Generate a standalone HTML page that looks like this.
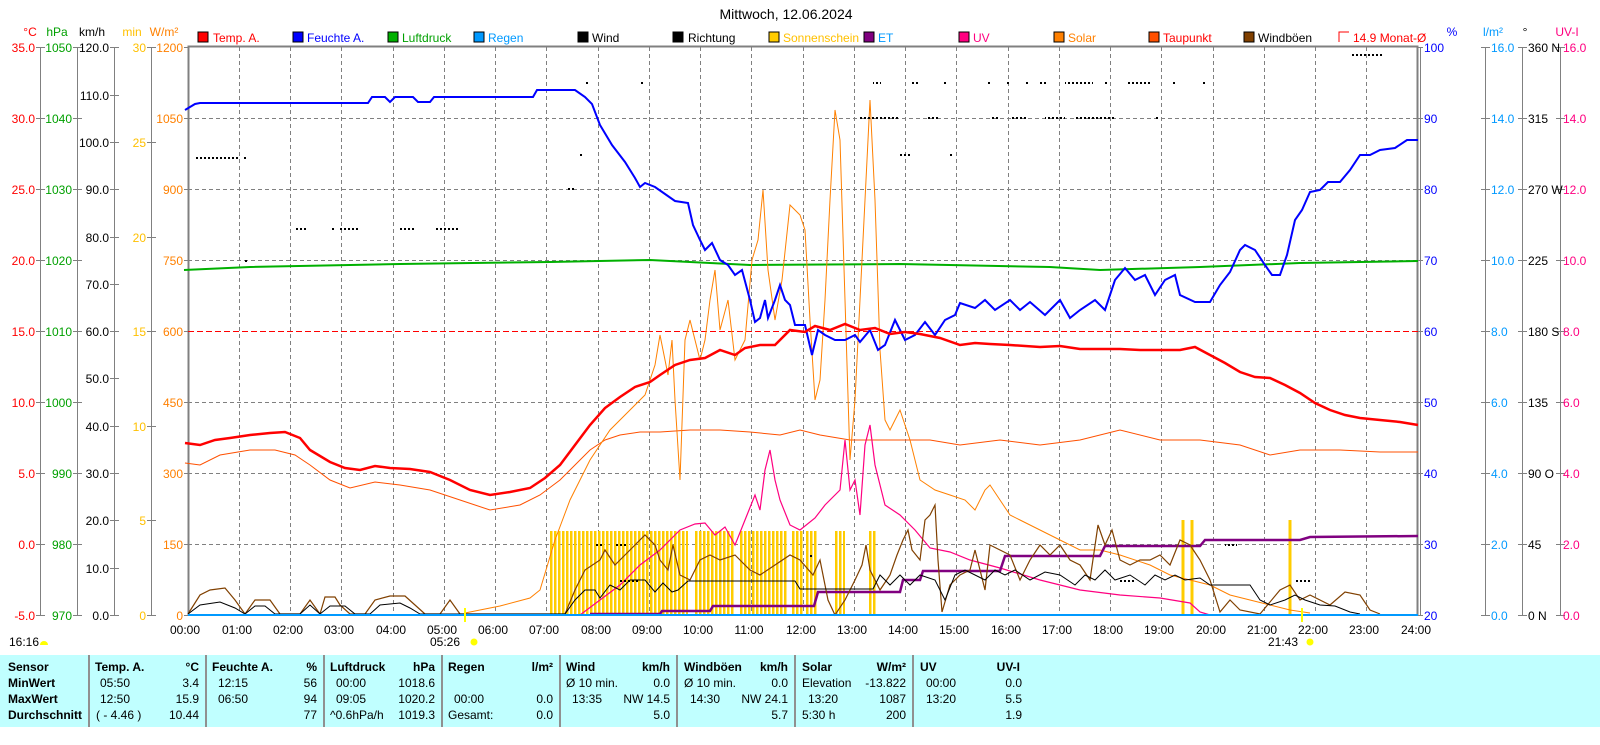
<!DOCTYPE html>
<html><head><meta charset="utf-8"><style>
html,body{margin:0;padding:0;background:#fff;}
body{width:1600px;height:740px;overflow:hidden;font-family:"Liberation Sans",Arial,sans-serif;}
svg text{font-family:"Liberation Sans",Arial,sans-serif;font-size:12px;}
</style></head><body>
<svg width="1600" height="740" xmlns="http://www.w3.org/2000/svg">
<defs><pattern id="dots" x="0" y="0" width="4" height="2" patternUnits="userSpaceOnUse"><rect x="0" y="0" width="2" height="2" fill="#000"/></pattern></defs>
<text x="786" y="19" text-anchor="middle" font-size="14" style="font-size:14px">Mittwoch, 12.06.2024</text>
<g>
<text x="30" y="36" fill="#f00" text-anchor="middle">°C</text>
<text x="57" y="36" fill="#00a000" text-anchor="middle">hPa</text>
<text x="92" y="36" text-anchor="middle">km/h</text>
<text x="132" y="36" fill="#ffc000" text-anchor="middle">min</text>
<text x="164" y="36" fill="#ff8000" text-anchor="middle">W/m²</text>
<text x="1452" y="36" fill="#00f" text-anchor="middle">%</text>
<text x="1493" y="36" fill="#0099ff" text-anchor="middle">l/m²</text>
<text x="1525" y="36" text-anchor="middle">°</text>
<text x="1567" y="36" fill="#ff0080" text-anchor="middle">UV-I</text>
</g>
<g font-size="12">
<rect x="198" y="32" width="10" height="10" fill="#f00" stroke="#000"/><text x="213" y="42" fill="#f00">Temp. A.</text>
<rect x="293" y="32" width="10" height="10" fill="#00f" stroke="#000"/><text x="307" y="42" fill="#00f">Feuchte A.</text>
<rect x="388" y="32" width="10" height="10" fill="#00b000" stroke="#000"/><text x="402" y="42" fill="#00a000">Luftdruck</text>
<rect x="474" y="32" width="10" height="10" fill="#0099ff" stroke="#000"/><text x="488" y="42" fill="#0099ff">Regen</text>
<rect x="578" y="32" width="10" height="10" fill="#000" stroke="#000"/><text x="592" y="42">Wind</text>
<rect x="673" y="32" width="10" height="10" fill="#000" stroke="#000"/><text x="688" y="42">Richtung</text>
<rect x="769" y="32" width="10" height="10" fill="#ffcc00" stroke="#000"/><text x="783" y="42" fill="#ffc000">Sonnenschein</text>
<rect x="864" y="32" width="10" height="10" fill="#800080" stroke="#000"/><text x="878" y="42" fill="#0099ff">ET</text>
<rect x="959" y="32" width="10" height="10" fill="#ff0080" stroke="#000"/><text x="973" y="42" fill="#ff0080">UV</text>
<rect x="1054" y="32" width="10" height="10" fill="#ff8000" stroke="#000"/><text x="1068" y="42" fill="#ff8000">Solar</text>
<rect x="1149" y="32" width="10" height="10" fill="#ff5000" stroke="#000"/><text x="1163" y="42" fill="#f00">Taupunkt</text>
<rect x="1244" y="32" width="10" height="10" fill="#804000" stroke="#000"/><text x="1258" y="42">Windböen</text>
<path d="M1339 42V32h10" fill="none" stroke="#f00"/><text x="1353" y="42" fill="#f00">14.9 Monat-Ø</text>
</g>
<g stroke="#808080" stroke-dasharray="4,3" stroke-width="1">
<path d="M239.5 47V615M290.5 47V615M341.5 47V615M393.5 47V615M444.5 47V615M495.5 47V615M546.5 47V615M598.5 47V615M649.5 47V615M700.5 47V615M751.5 47V615M803.5 47V615M854.5 47V615M905.5 47V615M956.5 47V615M1008.5 47V615M1059.5 47V615M1110.5 47V615M1161.5 47V615M1213.5 47V615M1264.5 47V615M1315.5 47V615M1366.5 47V615"/>
<path d="M188 118.5H1418M188 189.5H1418M188 260.5H1418M188 402.5H1418M188 473.5H1418M188 544.5H1418"/>
</g>
<path d="M188.5 615V46.5H1417.5V615" fill="none" stroke="#808080" stroke-width="2"/>
<path d="M1420.5 47V615" stroke="#808080"/>
<g stroke="#808080" fill="none">
<path d="M40.5 47V615M77.5 47V615M114.5 47V615M151.5 47V615"/>
<path d="M36 47.5h9M36 118.5h9M36 189.5h9M36 260.5h9M36 331.5h9M36 402.5h9M36 473.5h9M36 544.5h9M36 615.5h9"/>
<path d="M73 47.5h9M73 118.5h9M73 189.5h9M73 260.5h9M73 331.5h9M73 402.5h9M73 473.5h9M73 544.5h9M73 615.5h9"/>
<path d="M110 47.5h9M110 95.5h9M110 142.5h9M110 189.5h9M110 237.5h9M110 284.5h9M110 331.5h9M110 378.5h9M110 426.5h9M110 473.5h9M110 520.5h9M110 568.5h9M110 615.5h9"/>
<path d="M147 47.5h9M147 142.5h9M147 237.5h9M147 331.5h9M147 426.5h9M147 520.5h9M147 615.5h9"/>
<path d="M184 47.5h5M184 118.5h5M184 189.5h5M184 260.5h5M184 331.5h5M184 402.5h5M184 473.5h5M184 544.5h5M184 615.5h5"/>
<path d="M1485.5 47V615M1522.5 47V615M1560.5 47V615"/>
<path d="M1418 47.5h5M1418 118.5h5M1418 189.5h5M1418 260.5h5M1418 331.5h5M1418 402.5h5M1418 473.5h5M1418 544.5h5M1418 615.5h5"/>
<path d="M1481 47.5h9M1481 118.5h9M1481 189.5h9M1481 260.5h9M1481 331.5h9M1481 402.5h9M1481 473.5h9M1481 544.5h9M1481 615.5h9"/>
<path d="M1518 47.5h9M1518 118.5h9M1518 189.5h9M1518 260.5h9M1518 331.5h9M1518 402.5h9M1518 473.5h9M1518 544.5h9M1518 615.5h9"/>
<path d="M1556 47.5h9M1556 118.5h9M1556 189.5h9M1556 260.5h9M1556 331.5h9M1556 402.5h9M1556 473.5h9M1556 544.5h9M1556 615.5h9"/>
</g>
<g text-anchor="end">
<g fill="#f00"><text x="35" y="52">35.0</text><text x="35" y="123">30.0</text><text x="35" y="194">25.0</text><text x="35" y="265">20.0</text><text x="35" y="336">15.0</text><text x="35" y="407">10.0</text><text x="35" y="478">5.0</text><text x="35" y="549">0.0</text><text x="35" y="620">-5.0</text></g>
<g fill="#00a000"><text x="72" y="52">1050</text><text x="72" y="123">1040</text><text x="72" y="194">1030</text><text x="72" y="265">1020</text><text x="72" y="336">1010</text><text x="72" y="407">1000</text><text x="72" y="478">990</text><text x="72" y="549">980</text><text x="72" y="620">970</text></g>
<g><text x="109" y="52">120.0</text><text x="109" y="100">110.0</text><text x="109" y="147">100.0</text><text x="109" y="194">90.0</text><text x="109" y="242">80.0</text><text x="109" y="289">70.0</text><text x="109" y="336">60.0</text><text x="109" y="383">50.0</text><text x="109" y="431">40.0</text><text x="109" y="478">30.0</text><text x="109" y="525">20.0</text><text x="109" y="573">10.0</text><text x="109" y="620">0.0</text></g>
<g fill="#ffc000"><text x="146" y="52">30</text><text x="146" y="147">25</text><text x="146" y="242">20</text><text x="146" y="336">15</text><text x="146" y="431">10</text><text x="146" y="525">5</text><text x="146" y="620">0</text></g>
<g fill="#ff8000"><text x="183" y="52">1200</text><text x="183" y="123">1050</text><text x="183" y="194">900</text><text x="183" y="265">750</text><text x="183" y="336">600</text><text x="183" y="407">450</text><text x="183" y="478">300</text><text x="183" y="549">150</text><text x="183" y="620">0</text></g>
</g>
<g fill="#00f"><text x="1424" y="52">100</text><text x="1424" y="123">90</text><text x="1424" y="194">80</text><text x="1424" y="265">70</text><text x="1424" y="336">60</text><text x="1424" y="407">50</text><text x="1424" y="478">40</text><text x="1424" y="549">30</text><text x="1424" y="620">20</text></g>
<g fill="#0099ff"><text x="1491" y="52">16.0</text><text x="1491" y="123">14.0</text><text x="1491" y="194">12.0</text><text x="1491" y="265">10.0</text><text x="1491" y="336">8.0</text><text x="1491" y="407">6.0</text><text x="1491" y="478">4.0</text><text x="1491" y="549">2.0</text><text x="1491" y="620">0.0</text></g>
<g><text x="1528" y="52">360 N</text><text x="1528" y="123">315</text><text x="1528" y="194">270 W</text><text x="1528" y="265">225</text><text x="1528" y="336">180 S</text><text x="1528" y="407">135</text><text x="1528" y="478">90  O</text><text x="1528" y="549">45</text><text x="1528" y="620">0   N</text></g>
<g fill="#ff0080"><text x="1563" y="52">16.0</text><text x="1563" y="123">14.0</text><text x="1563" y="194">12.0</text><text x="1563" y="265">10.0</text><text x="1563" y="336">8.0</text><text x="1563" y="407">6.0</text><text x="1563" y="478">4.0</text><text x="1563" y="549">2.0</text><text x="1563" y="620">0.0</text></g>
<g stroke="#ffcc00" stroke-width="2.5" stroke-dasharray="2.5,1.5">
<path d="M550 573H688M695 573H735M740 573H787M792 573H803M806 573H818M835 573H845M869 573H876" stroke-width="84"/>
</g>
<path d="M1183 615V520M1192 615V520M1290 615V520" stroke="#ffcc00" stroke-width="3"/>
<path d="M188 331.5H1418" stroke="#f00" stroke-dasharray="6,3"/>
<polyline fill="none" stroke="#00b000" stroke-width="2" points="184,270 250,267 400,264 550,262 650,260 750,265 900,264 1050,267 1100,270 1200,267 1300,263 1418,261"/>
<polyline fill="none" stroke="#ff5000" stroke-width="1" points="185,463 200,465 220,455 250,450 275,450 295,455 310,465 330,480 350,488 375,482 400,485 430,490 460,500 490,510 520,505 540,495 560,480 575,465 590,450 605,440 620,435 640,432 660,432 690,430 720,430 750,432 780,435 800,430 820,435 850,440 880,440 900,440 930,440 960,445 1000,440 1040,445 1080,440 1120,430 1160,440 1200,440 1240,445 1270,455 1300,450 1340,450 1380,452 1418,452"/>
<polyline fill="none" stroke="#ff8000" stroke-width="1" points="465,613 500,606 530,598 540,590 555,540 570,500 590,460 610,430 630,410 645,395 655,365 660,335 668,375 672,340 675,400 680,480 685,340 690,320 700,360 705,340 710,300 715,270 720,330 728,300 735,360 745,340 752,260 758,240 763,190 768,270 775,320 782,280 790,205 795,210 800,215 805,230 810,320 815,400 820,380 825,300 830,200 835,110 840,140 845,300 850,460 855,400 860,300 865,200 870,100 875,200 880,350 885,420 890,430 900,410 910,440 920,480 935,490 950,495 965,500 975,510 985,490 990,485 1000,500 1010,515 1020,520 1030,525 1040,530 1060,540 1080,550 1100,550 1120,555 1150,565 1170,575 1190,580 1210,585 1230,595 1250,600 1270,605 1290,610 1310,613"/>
<polyline fill="none" stroke="#ff0080" stroke-width="1.2" points="580,615 600,600 620,585 640,565 660,550 680,530 695,524 705,523 715,535 725,527 735,545 745,520 755,495 760,510 765,470 770,450 775,480 780,500 790,525 800,530 815,518 825,505 840,490 845,440 850,490 855,480 860,515 865,445 870,425 875,465 885,505 900,515 915,530 930,548 950,552 970,560 1000,568 1040,580 1080,590 1120,595 1160,598 1190,603 1200,612 1210,615"/>
<polyline fill="none" stroke="#800080" stroke-width="2.5" points="590,614 660,614 662,611 710,611 713,606 814,606 818,592 900,592 903,580 920,580 923,571 1000,571 1005,556 1100,556 1105,546 1200,546 1205,540 1300,540 1310,537 1418,536"/>
<polyline fill="none" stroke="#804000" stroke-width="1.2" points="188,614 200,595 210,590 225,588 235,600 245,614 255,600 270,600 280,614 300,614 310,600 320,614 325,597 335,597 340,605 350,614 365,614 375,600 390,596 405,596 415,605 425,614 440,614 450,600 460,614 565,614 575,590 585,570 600,560 605,550 615,565 625,555 635,545 645,535 655,545 660,560 668,570 673,545 680,575 690,580 700,560 710,555 720,560 735,555 750,570 760,575 775,565 790,555 800,560 813,575 820,560 828,600 835,615 845,600 855,580 862,565 866,545 870,570 880,590 890,575 897,555 903,540 908,530 912,550 920,560 925,520 930,515 935,505 938,560 942,612 950,585 960,575 970,570 975,550 985,590 990,545 1000,550 1010,555 1020,580 1030,560 1040,545 1050,555 1060,545 1070,560 1080,565 1090,580 1098,525 1105,545 1112,530 1120,560 1130,565 1140,560 1150,560 1160,555 1170,565 1180,540 1190,545 1200,560 1210,580 1220,612 1230,600 1240,610 1260,614 1280,590 1290,585 1300,600 1310,595 1330,605 1345,592 1360,595 1370,610 1380,614"/>
<polyline fill="none" stroke="#000" stroke-width="1" points="188,614 200,605 220,602 235,608 245,614 255,606 265,606 275,614 300,614 310,605 320,614 330,606 345,606 355,614 370,614 380,605 400,603 410,608 420,614 460,614 565,614 575,600 585,590 595,590 600,598 610,585 620,590 630,580 645,580 655,592 663,583 672,592 678,590 688,581 795,581 800,589 873,589 880,575 890,585 900,575 910,585 920,575 935,580 945,600 955,575 965,570 975,575 985,580 995,570 1005,575 1015,570 1030,580 1045,572 1060,575 1075,585 1085,575 1095,580 1105,570 1115,580 1130,575 1145,585 1155,575 1165,580 1175,575 1185,580 1200,578 1210,585 1250,585 1260,600 1270,605 1285,600 1295,595 1305,600 1320,605 1335,606 1350,612 1360,614"/>
<g fill="url(#dots)">
<rect x="196" y="157" width="44" height="2"/><rect x="244" y="157" width="2" height="2" fill="#000"/><rect x="296" y="228" width="12" height="2"/><rect x="332" y="228" width="2" height="2" fill="#000"/><rect x="340" y="228" width="20" height="2"/><rect x="400" y="228" width="16" height="2"/><rect x="436" y="228" width="24" height="2"/><rect x="245" y="260" width="2" height="2" fill="#000"/>
<rect x="586" y="82" width="2" height="2" fill="#000"/><rect x="641" y="82" width="2" height="2" fill="#000"/><rect x="578" y="154" width="6" height="2"/><rect x="568" y="188" width="6" height="2"/>
<rect x="873" y="82" width="8" height="2"/><rect x="912" y="82" width="8" height="2"/><rect x="944" y="82" width="2" height="2" fill="#000"/><rect x="988" y="82" width="2" height="2" fill="#000"/><rect x="1007" y="82" width="2" height="2" fill="#000"/><rect x="1026" y="82" width="2" height="2" fill="#000"/><rect x="1040" y="82" width="8" height="2"/><rect x="1065" y="82" width="28" height="2"/><rect x="1105" y="82" width="2" height="2" fill="#000"/><rect x="1126" y="82" width="24" height="2"/><rect x="1173" y="82" width="2" height="2" fill="#000"/><rect x="1203" y="82" width="2" height="2" fill="#000"/>
<rect x="858" y="117" width="40" height="2"/><rect x="926" y="117" width="12" height="2"/><rect x="992" y="117" width="8" height="2"/><rect x="1010" y="117" width="16" height="2"/><rect x="1045" y="117" width="20" height="2"/><rect x="1075" y="117" width="40" height="2"/><rect x="1155" y="117" width="4" height="2"/>
<rect x="900" y="154" width="12" height="2"/><rect x="950" y="154" width="2" height="2" fill="#000"/><rect x="1350" y="54" width="32" height="2"/>
<rect x="595" y="544" width="8" height="2"/><rect x="615" y="544" width="12" height="2"/><rect x="620" y="580" width="20" height="2"/><rect x="810" y="555" width="2" height="2" fill="#000"/><rect x="1225" y="544" width="12" height="2"/><rect x="1296" y="580" width="16" height="2"/><rect x="1120" y="580" width="16" height="2"/>
</g>
<polyline fill="none" stroke="#00f" stroke-width="2" points="185,110 195,104 200,103 368,103 372,97 385,97 390,102 395,97 413,97 418,102 430,102 434,97 533,97 537,90 575,90 585,97 592,104 600,125 612,145 625,162 635,178 640,187 645,183 655,187 665,194 675,201 688,203 693,225 700,240 705,250 712,243 720,260 728,265 735,275 742,270 750,300 755,322 760,318 765,300 768,318 775,300 780,285 785,300 790,305 795,325 805,325 812,355 818,330 825,335 835,340 845,340 855,335 860,342 870,330 878,350 885,345 895,320 905,340 915,335 925,322 935,335 945,320 955,315 960,303 975,308 985,300 995,310 1010,300 1020,310 1030,302 1045,315 1060,300 1070,318 1080,310 1095,300 1105,310 1115,280 1125,268 1135,280 1145,275 1155,295 1165,280 1175,275 1180,295 1195,302 1210,302 1220,285 1230,272 1240,250 1245,245 1255,250 1265,265 1272,275 1280,275 1287,255 1295,220 1302,210 1310,192 1320,190 1328,182 1340,182 1350,170 1360,155 1370,155 1380,150 1395,148 1407,140 1418,140"/>
<polyline fill="none" stroke="#f00" stroke-width="2.5" points="185,443 200,445 215,440 230,438 250,435 270,433 285,432 300,438 310,450 330,462 345,468 360,470 375,466 390,468 410,469 430,472 450,480 470,490 490,495 510,492 530,488 545,478 560,465 575,445 590,425 605,408 620,397 635,387 650,382 660,375 675,365 690,360 705,358 720,350 735,355 745,348 760,345 775,345 790,330 805,332 815,326 830,330 845,324 860,330 875,328 890,334 905,332 920,334 940,338 960,345 975,343 990,344 1010,345 1040,347 1060,346 1080,349 1100,349 1120,349 1140,350 1160,350 1180,350 1195,347 1210,355 1225,363 1240,372 1255,377 1270,378 1285,385 1300,393 1315,403 1330,410 1345,415 1360,418 1380,420 1400,422 1418,425"/>
<path d="M188 615H1418" stroke="#0099ff" stroke-width="2"/>
<path d="M465 608V622M1302 608V622" stroke="#ffff00" stroke-width="2"/>
<g text-anchor="middle">
<text x="185" y="634">00:00</text><text x="237" y="634">01:00</text><text x="288" y="634">02:00</text><text x="339" y="634">03:00</text><text x="391" y="634">04:00</text><text x="442" y="634">05:00</text><text x="493" y="634">06:00</text><text x="544" y="634">07:00</text><text x="596" y="634">08:00</text><text x="647" y="634">09:00</text><text x="698" y="634">10:00</text><text x="749" y="634">11:00</text><text x="801" y="634">12:00</text><text x="852" y="634">13:00</text><text x="903" y="634">14:00</text><text x="954" y="634">15:00</text><text x="1006" y="634">16:00</text><text x="1057" y="634">17:00</text><text x="1108" y="634">18:00</text><text x="1159" y="634">19:00</text><text x="1211" y="634">20:00</text><text x="1262" y="634">21:00</text><text x="1313" y="634">22:00</text><text x="1364" y="634">23:00</text><text x="1416" y="634">24:00</text>
<text x="445" y="646">05:26</text><text x="1283" y="646">21:43</text><text x="24" y="646">16:16</text>
</g>
<circle cx="474" cy="642" r="3.5" fill="#ffff00"/><circle cx="1310" cy="642" r="3.5" fill="#ffff00"/>
<path d="M40 645a4 4 0 0 1 8 0z" fill="#ffff00"/>
<rect x="0" y="655" width="1600" height="72" fill="#c0ffff"/>
<g stroke="#909090" stroke-width="2"><path d="M89 655V727M206 655V727M324 655V727M442 655V727M560 655V727M677 655V727M795 655V727M913 655V727"/></g>
<g font-weight="bold" style="font-weight:bold"><text x="8" y="671">Sensor</text><text x="8" y="687">MinWert</text><text x="8" y="703">MaxWert</text><text x="8" y="719">Durchschnitt</text>
<text x="95" y="671">Temp. A.</text><text x="212" y="671">Feuchte A.</text><text x="330" y="671">Luftdruck</text><text x="448" y="671">Regen</text><text x="566" y="671">Wind</text><text x="684" y="671">Windböen</text><text x="802" y="671">Solar</text><text x="920" y="671">UV</text></g>
<g font-weight="bold" text-anchor="end" style="font-weight:bold"><text x="199" y="671">°C</text><text x="317" y="671">%</text><text x="435" y="671">hPa</text><text x="553" y="671">l/m²</text><text x="670" y="671">km/h</text><text x="788" y="671">km/h</text><text x="906" y="671">W/m²</text><text x="1020" y="671">UV-I</text></g>
<g><text x="100" y="687">05:50</text><text x="100" y="703">12:50</text><text x="96" y="719">( - 4.46 )</text>
<text x="218" y="687">12:15</text><text x="218" y="703">06:50</text>
<text x="336" y="687">00:00</text><text x="336" y="703">09:05</text><text x="330" y="719">^0.6hPa/h</text>
<text x="454" y="703">00:00</text><text x="448" y="719">Gesamt:</text>
<text x="566" y="687">Ø 10 min.</text><text x="572" y="703">13:35</text>
<text x="684" y="687">Ø 10 min.</text><text x="690" y="703">14:30</text>
<text x="802" y="687">Elevation</text><text x="808" y="703">13:20</text><text x="802" y="719">5:30 h</text>
<text x="926" y="687">00:00</text><text x="926" y="703">13:20</text></g>
<g text-anchor="end"><text x="199" y="687">3.4</text><text x="199" y="703">15.9</text><text x="199" y="719">10.44</text>
<text x="317" y="687">56</text><text x="317" y="703">94</text><text x="317" y="719">77</text>
<text x="435" y="687">1018.6</text><text x="435" y="703">1020.2</text><text x="435" y="719">1019.3</text>
<text x="553" y="703">0.0</text><text x="553" y="719">0.0</text>
<text x="670" y="687">0.0</text><text x="670" y="703">NW 14.5</text><text x="670" y="719">5.0</text>
<text x="788" y="687">0.0</text><text x="788" y="703">NW 24.1</text><text x="788" y="719">5.7</text>
<text x="906" y="687">-13.822</text><text x="906" y="703">1087</text><text x="906" y="719">200</text>
<text x="1022" y="687">0.0</text><text x="1022" y="703">5.5</text><text x="1022" y="719">1.9</text></g>
</svg>
</body></html>
